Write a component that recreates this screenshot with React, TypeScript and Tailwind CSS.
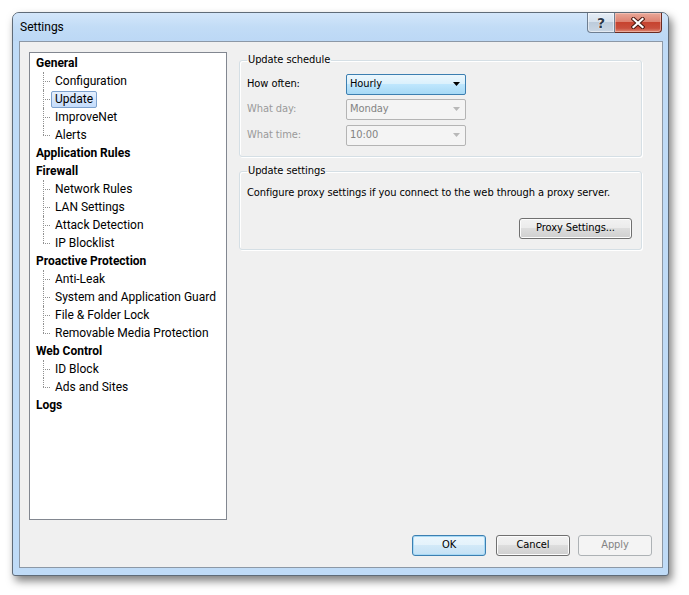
import React from "react";

const UI = "'DejaVu Sans Condensed', 'DejaVu Sans', sans-serif";
const SEGOE = "Roboto, 'Noto Sans', sans-serif";

type Node = { label: string; children?: string[] };

const tree: Node[] = [
  { label: "General", children: ["Configuration", "Update", "ImproveNet", "Alerts"] },
  { label: "Application Rules" },
  { label: "Firewall", children: ["Network Rules", "LAN Settings", "Attack Detection", "IP Blocklist"] },
  {
    label: "Proactive Protection",
    children: ["Anti-Leak", "System and Application Guard", "File & Folder Lock", "Removable Media Protection"],
  },
  { label: "Web Control", children: ["ID Block", "Ads and Sites"] },
  { label: "Logs" },
];

function ChildRow({ label, last, selected }: { label: string; last: boolean; selected: boolean }) {
  return (
    <div className="flex h-[18px] items-center pl-[13px]">
      <div className="relative h-full w-[8px] shrink-0">
        <div
          className={
            "absolute left-0 top-0 w-0 border-l border-dotted border-[#909090] " + (last ? "h-[9px]" : "h-full")
          }
        />
        <div className="absolute left-0 top-[9px] h-0 w-[7px] border-t border-dotted border-[#909090]" />
      </div>
      <div
        className={
          "flex h-[17px] items-center rounded-[2px] border px-[3px] " +
          (selected
            ? "border-[#7da2ce] bg-gradient-to-b from-[#e4effd] to-[#c4dcfb]"
            : "border-transparent")
        }
      >
        {label}
      </div>
    </div>
  );
}

function Combo({ value, disabled }: { value: string; disabled?: boolean }) {
  return (
    <div
      className={
        "flex h-[21px] w-[120px] items-center rounded-[2px] border pl-[3px] pr-[4px] " +
        (disabled
          ? "border-[#b4b4b4] bg-[#f4f4f4] text-[#838383]"
          : "border-[#3c7fb1] bg-[linear-gradient(#ecf7fd_0%,#d9f0fc_50%,#bee6fd_50%,#a7d9f5_100%)] text-black")
      }
    >
      <span className="flex-1">{value}</span>
      <svg width="8" height="5" viewBox="0 0 8 5">
        <path d="M0 0 H7 L3.5 4 Z" fill={disabled ? "#b8b8b8" : "#000"} />
      </svg>
    </div>
  );
}

function Btn({
  children,
  w,
  variant = "normal",
}: {
  children: React.ReactNode;
  w: string;
  variant?: "normal" | "default" | "disabled";
}) {
  const cls =
    variant === "disabled"
      ? "border-[#adb2b5] bg-[#f4f4f4] text-[#838383]"
      : variant === "default"
      ? "border-[#3c7fb1] bg-[linear-gradient(#eaf6fd_0%,#e4f2fb_50%,#d2e9f8_50%,#c4e1f5_100%)] shadow-[inset_0_0_0_1px_#a7d9f5] text-black"
      : "border-[#707070] bg-[linear-gradient(#f2f2f2_0%,#ebebeb_50%,#dddddd_50%,#cfcfcf_100%)] shadow-[inset_0_0_0_1px_#fcfcfc] text-black";
  return (
    <div className={"flex h-[21px] items-center justify-center rounded-[3px] border " + w + " " + cls}>
      {children}
    </div>
  );
}

export default function App() {
  return (
    <div className="h-[595px] w-[689px] overflow-hidden bg-white pl-[12px] pt-[12px]">
      <div className="relative flex h-[564px] w-[657px] flex-col rounded-t-[7px] rounded-b-[3px] border border-[#5f6b78] bg-[#bfdbf7] shadow-[3px_5px_9px_rgba(0,0,0,0.5)]">
        {/* title bar */}
        <div className="flex h-[28px] rounded-t-[6px] bg-gradient-to-b from-[#d3e6fa] via-[#c2dcf6] to-[#bcd8f5]">
          <div
            className="flex items-center pb-[1px] pl-[7px] text-[12px] text-black"
            style={{ fontFamily: SEGOE }}
          >
            Settings
          </div>
          <div className="ml-auto mr-[6px] flex h-[20px] self-start">
            <div className="flex h-full w-[28px] items-center justify-center rounded-bl-[4px] border border-t-0 border-[#6e7e91] bg-[linear-gradient(#e6eef7_0%,#d4e0ec_50%,#bccbdb_50%,#c9d6e4_100%)] shadow-[inset_0_0_0_1px_rgba(255,255,255,0.5)]">
              <span
                className="text-[14px] font-bold leading-none text-[#2d3a4a]"
                style={{
                  fontFamily: "'DejaVu Sans', sans-serif",
                  textShadow: "0 0 1px #fff, 0 0 1px #fff, 0 0 1px #fff",
                }}
              >
                ?
              </span>
            </div>
            <div className="flex h-full w-[47px] items-center justify-center rounded-br-[4px] border border-l-0 border-t-0 border-[#6a2b22] bg-[linear-gradient(#e9a899_0%,#dd8271_45%,#c7432f_50%,#c94f3d_80%,#e08b76_100%)] shadow-[inset_0_0_0_1px_rgba(255,220,210,0.45)]">
              <svg width="14" height="12" viewBox="0 0 14 12">
                <path d="M2.5 2 L11.5 10 M11.5 2 L2.5 10" stroke="#4a1a12" strokeWidth="4.2" strokeLinecap="square" />
                <path d="M2.5 2 L11.5 10 M11.5 2 L2.5 10" stroke="#ffffff" strokeWidth="2.2" strokeLinecap="square" />
              </svg>
            </div>
          </div>
        </div>

        {/* client area */}
        <div
          className="ml-[6px] flex h-[527px] w-[644px] flex-col border border-[#8c98a6] bg-[#f0f0f0] text-[11px] tracking-[-0.08px]"
          style={{ fontFamily: UI }}
        >
          <div className="ml-[9px] mt-[10px] flex gap-[12px]">
            {/* tree */}
            <div
              className="h-[468px] w-[198px] shrink-0 border border-[#828790] bg-white pt-[1px] text-[12px] tracking-normal text-black"
              style={{ fontFamily: SEGOE }}
            >
              {tree.map((n) => (
                <div key={n.label}>
                  <div className="flex h-[18px] items-center pl-[6px] font-bold">{n.label}</div>
                  {n.children?.map((c, i) => (
                    <ChildRow
                      key={c}
                      label={c}
                      last={i === n.children!.length - 1}
                      selected={c === "Update"}
                    />
                  ))}
                </div>
              ))}
            </div>

            {/* right side */}
            <div className="flex w-[403px] flex-col text-black">
              <fieldset className="rounded-[3px] border border-[#d5dfe5] pb-[10px] pl-[7px] shadow-[inset_1px_1px_0_#fff,1px_1px_0_#fff]">
                <legend className="px-[1px] leading-[16px]">Update schedule</legend>
                <div className="mt-[6px] flex items-center">
                  <span className="w-[99px]">How often:</span>
                  <Combo value="Hourly" />
                </div>
                <div className="mt-[4px] flex items-center text-[#9a9a9a]">
                  <span className="w-[99px]">What day:</span>
                  <Combo value="Monday" disabled />
                </div>
                <div className="mt-[5px] flex items-center text-[#9a9a9a]">
                  <span className="w-[99px]">What time:</span>
                  <Combo value="10:00" disabled />
                </div>
              </fieldset>

              <fieldset className="mt-[6px] rounded-[3px] border border-[#d5dfe5] pb-[10px] pl-[7px] pr-[9px] shadow-[inset_1px_1px_0_#fff,1px_1px_0_#fff]">
                <legend className="px-[1px] leading-[16px]">Update settings</legend>
                <div className="mt-[7px] leading-[14px]">
                  Configure proxy settings if you connect to the web through a proxy server.
                </div>
                <div className="mt-[18px] flex justify-end">
                  <Btn w="w-[113px]">Proxy Settings...</Btn>
                </div>
              </fieldset>
            </div>
          </div>

          {/* buttons */}
          <div className="mt-auto flex justify-end pb-[11px] pr-[10px]">
            <Btn w="w-[74px]" variant="default">
              OK
            </Btn>
            <div className="w-[10px]" />
            <Btn w="w-[74px]">Cancel</Btn>
            <div className="w-[8px]" />
            <Btn w="w-[74px]" variant="disabled">
              Apply
            </Btn>
          </div>
        </div>
      </div>
    </div>
  );
}
